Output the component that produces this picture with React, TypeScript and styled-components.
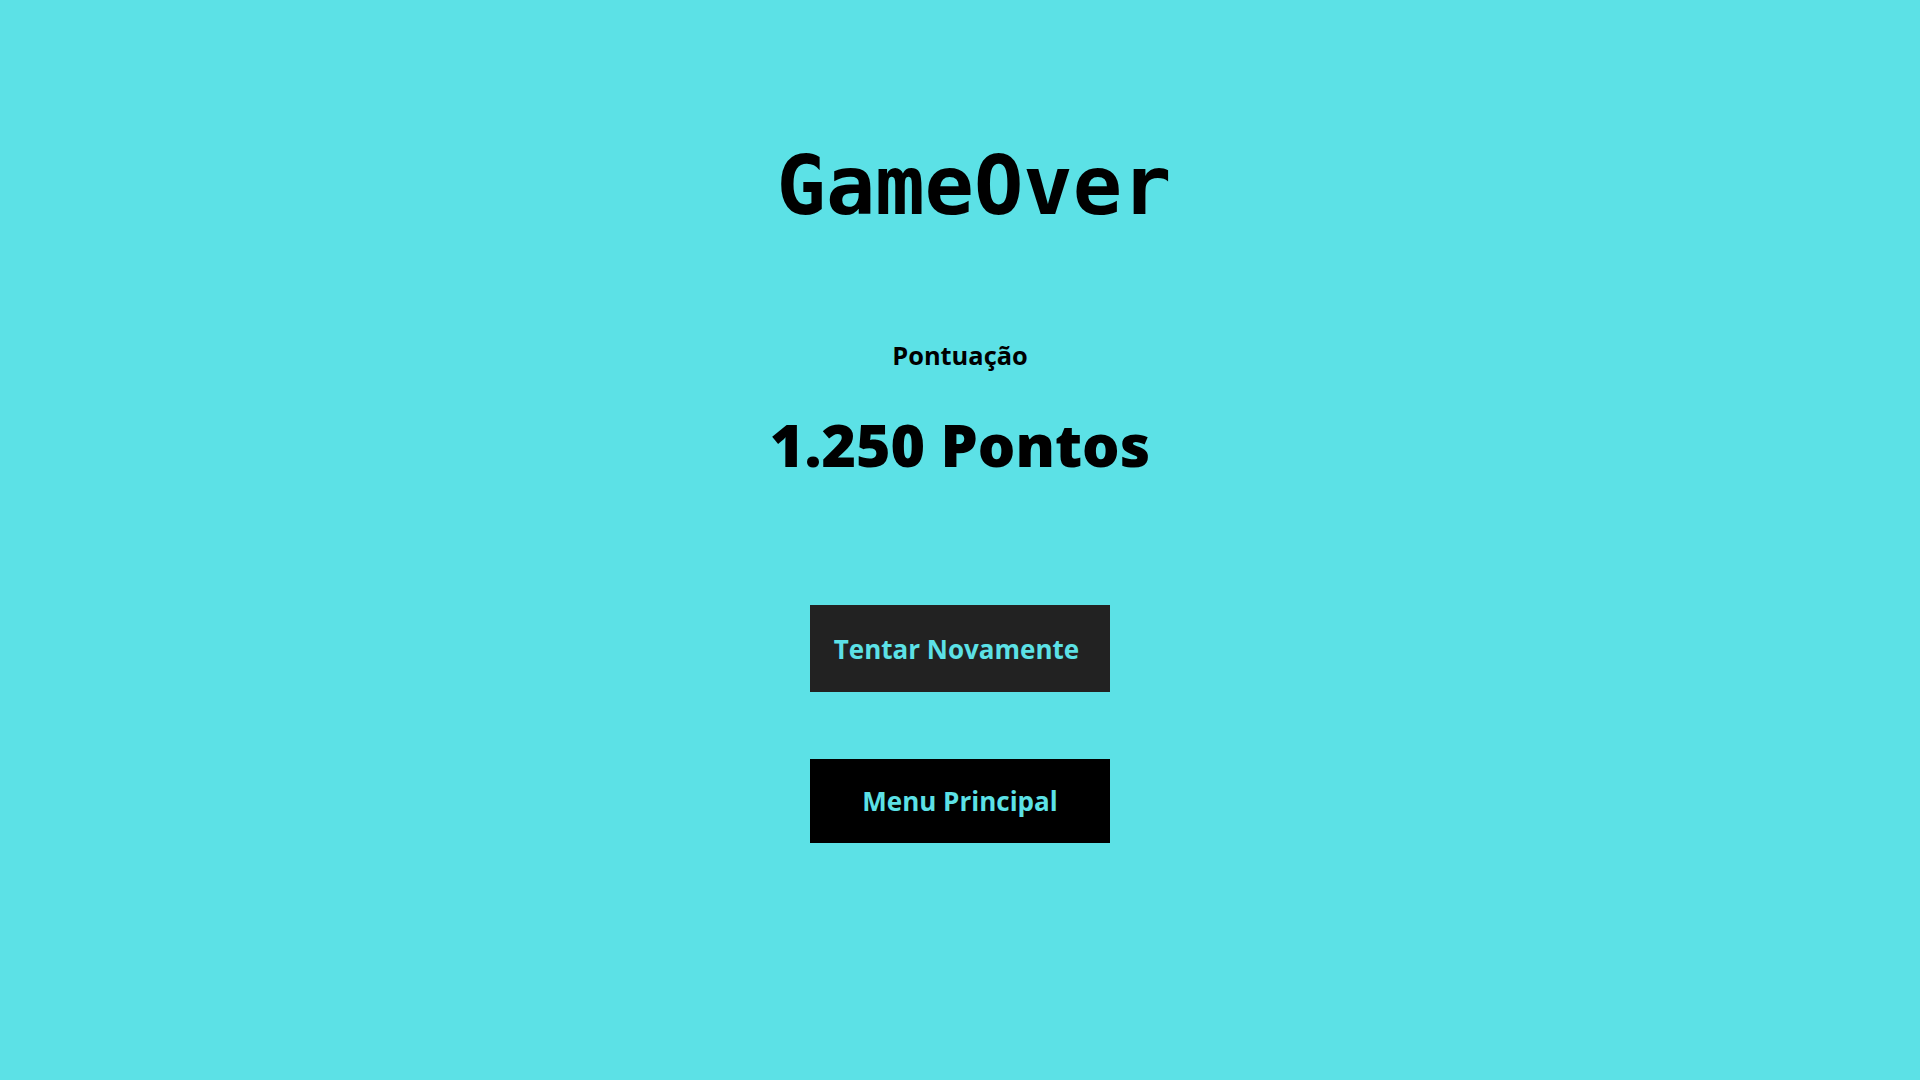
import * as React from 'react';
import styled, { createGlobalStyle } from 'styled-components';

const CYAN = '#5ce1e6';

const GlobalStyle = createGlobalStyle`
  html, body {
    margin: 0;
    padding: 0;
    background: ${CYAN};
  }
  body {
    font-family: "Open Sans", "Liberation Sans", sans-serif;
  }
`;

const Screen = styled.div`
  min-height: 100vh;
  display: flex;
  flex-direction: column;
  align-items: center;
  padding-top: 145px;
  box-sizing: border-box;
`;

const Title = styled.h1`
  margin: 0;
  padding-left: 28px;
  font-family: "DejaVu Sans Mono", "Liberation Mono", monospace;
  font-size: 82px;
  line-height: 1;
  font-weight: 700;
  color: #000;
`;

const ScoreLabel = styled.div`
  margin-top: 116px;
  font-size: 25.4px;
  line-height: 1;
  font-weight: 700;
  color: #000;
`;

const ScoreValue = styled.div`
  margin-top: 47px;
  font-size: 59px;
  line-height: 1;
  font-weight: 800;
  color: #000;
`;

const Actions = styled.div`
  margin-top: 131px;
  display: flex;
  flex-direction: column;
  gap: 67px;
`;

const MenuButton = styled.button<{ $dark?: boolean; $height: number }>`
  width: 300px;
  height: ${p => p.$height}px;
  border: none;
  margin: 0;
  padding: 0 ${p => (p.$dark ? 0 : 7)}px 0 0;
  display: flex;
  align-items: center;
  justify-content: center;
  background: ${p => (p.$dark ? '#000' : '#222222')};
  color: ${CYAN};
  font-family: "Open Sans", "Liberation Sans", sans-serif;
  font-size: 26px;
  font-weight: 700;
  cursor: pointer;
`;

const App: React.FunctionComponent = () => {
  return (
    <>
      <GlobalStyle />
      <Screen>
        <Title>GameOver</Title>
        <ScoreLabel>Pontuação</ScoreLabel>
        <ScoreValue>1.250 Pontos</ScoreValue>
        <Actions>
          <MenuButton $height={87}>Tentar Novamente</MenuButton>
          <MenuButton $dark $height={84}>Menu Principal</MenuButton>
        </Actions>
      </Screen>
    </>
  );
};

export default App;
